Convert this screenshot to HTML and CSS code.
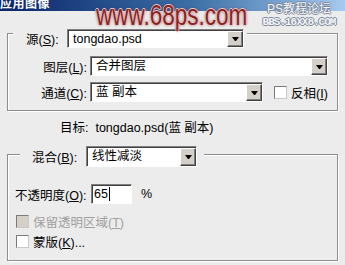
FILE: index.html
```html
<!DOCTYPE html>
<html lang="zh-CN">
<head>
    <meta charset="UTF-8">
    <meta name="viewport" content="width=device-width, initial-scale=1.0">
    <title>应用图像</title>
    <link rel="stylesheet" href="styles.css">
</head>
<body>
    <div class="titlebar"><span class="title">应用图像</span></div>

    <!-- watermark over the title bar -->
    <div class="watermark">www.68ps.com</div>
    <div class="bbs">
        <span class="bbs-cn">PS教程论坛</span>
        <span class="bbs-url">BBS.16XX8.COM</span>
    </div>

    <div class="dialog">
        <div class="group group-source">
            <div class="group-head head-source">
                <span class="lbl">源(<u>S</u>):</span>
                <div class="combo combo-source">
                    <span class="combo-text">tongdao.psd</span>
                    <span class="combo-btn"><i class="arrow"></i></span>
                </div>
            </div>
            <div class="field-grid">
                <span class="lbl">图层(<u>L</u>):</span>
                <div class="combo combo-layer">
                    <span class="combo-text">合并图层</span>
                    <span class="combo-btn"><i class="arrow"></i></span>
                </div>
                <span class="lbl">通道(<u>C</u>):</span>
                <div class="channel-row">
                    <div class="combo combo-channel">
                        <span class="combo-text">蓝 副本</span>
                        <span class="combo-btn"><i class="arrow"></i></span>
                    </div>
                    <span class="check"></span>
                    <span class="check-text">反相(<u>I</u>)</span>
                </div>
            </div>
        </div>

        <div class="target">目标:&nbsp; tongdao.psd(蓝 副本)</div>

        <div class="group group-blend">
            <div class="group-head head-blend">
                <span class="lbl">混合(<u>B</u>):</span>
                <div class="combo combo-blend">
                    <span class="combo-text">线性减淡</span>
                    <span class="combo-btn"><i class="arrow"></i></span>
                </div>
            </div>
            <div class="opacity-row">
                <span class="lbl opacity-label">不透明度(<u>O</u>):</span>
                <div class="textbox"><span>65</span><i class="caret"></i></div>
                <span class="percent">%</span>
            </div>
            <div class="check-row disabled">
                <span class="check check-disabled"></span>
                <span class="check-text">保留透明区域(<u>T</u>)</span>
            </div>
            <div class="check-row">
                <span class="check"></span>
                <span class="check-text">蒙版(<u>K</u>)...</span>
            </div>
        </div>
    </div>
</body>
</html>
```

FILE: styles.css
```css
body {
    margin: 0;
    width: 345px;
    height: 265px;
    overflow: hidden;
    position: relative;
    background-color: #ececec;
    color: #000;
    font-family: 'Liberation Sans', 'Noto Sans CJK SC', sans-serif;
    font-size: 12.5px;
}

.titlebar {
    height: 11px;
    overflow: hidden;
    background: linear-gradient(to right, #0a246a 0%, #3a6ea5 55%, #a6caf0 100%);
    color: #fff;
    font-weight: bold;
    font-size: 12px;
    line-height: 9px;
}

.title {
    letter-spacing: 0.5px;
}

.watermark {
    position: absolute;
    left: 96px;
    top: 0;
    font-family: 'Liberation Sans', Arial, sans-serif;
    font-size: 30px;
    line-height: 30px;
    color: #8a2222;
    transform: scaleX(0.75);
    transform-origin: left top;
    text-shadow: 1px 0 0 #e9c9c9, -1px 0 0 #e9c9c9, 0 1px 0 #e9c9c9, 0 -1px 0 #e9c9c9,
        0 0 3px #6b1515;
}

.bbs {
    position: absolute;
    left: 261px;
    top: 3px;
    width: 76px;
    display: flex;
    flex-direction: column;
    align-items: center;
    color: #f4f6fa;
    text-shadow: 1px 0 0 #7d8799, -1px 0 0 #7d8799, 0 1px 0 #7d8799, 0 -1px 0 #7d8799;
}

.bbs-cn {
    font-size: 12px;
    line-height: 13px;
}

.bbs-url {
    font-family: 'Liberation Mono', monospace;
    font-weight: bold;
    font-size: 11px;
    line-height: 12px;
    letter-spacing: -1px;
}

.dialog {
    padding: 0 7px;
}

.group {
    border: 1px solid #8d8d8d;
    box-shadow: inset 1px 1px 0 #fff, 1px 1px 0 #fff;
}

.group-source {
    margin-top: 22px;
    padding-bottom: 8px;
}

.group-head {
    display: flex;
    align-items: center;
    width: fit-content;
    background-color: #ececec;
}

.head-source {
    margin: -5px 0 0 5px;
    padding: 0 3px 0 13px;
    gap: 5px;
}

.head-source .lbl {
    width: 36px;
}

.head-blend {
    margin: -9px 0 0 5px;
    padding: 0 7px 0 12px;
    gap: 6px;
}

.head-blend .lbl {
    width: 48px;
}

.lbl {
    white-space: nowrap;
}

.combo {
    display: flex;
    height: 20px;
    box-sizing: border-box;
    background-color: #fff;
    border: 1px solid;
    border-color: #808080 #fff #fff #808080;
    box-shadow: inset 1px 1px 0 #404040;
}

.combo-source {
    width: 177px;
    height: 19px;
}

.combo-layer {
    width: 238px;
}

.combo-channel {
    width: 173px;
}

.combo-blend {
    width: 111px;
    height: 21px;
}

.combo-text {
    flex: 1;
    padding: 1px 0 0 5px;
    line-height: 16px;
    white-space: nowrap;
    overflow: hidden;
}

.combo-btn {
    width: 16px;
    margin: 1px 0 0 0;
    box-sizing: border-box;
    display: flex;
    align-items: center;
    justify-content: center;
    background-color: #d4d0c8;
    border: 1px solid;
    border-color: #fff #404040 #404040 #fff;
    box-shadow: inset -1px -1px 0 #808080;
}

.arrow {
    width: 1px;
    height: 0;
    border-top: 4px solid #000;
    border-left: 3px solid transparent;
    border-right: 3px solid transparent;
}

.field-grid {
    display: grid;
    grid-template-columns: 79px auto;
    column-gap: 3px;
    row-gap: 6px;
    align-items: center;
    margin-top: 8px;
}

.field-grid .lbl {
    text-align: right;
}

.channel-row {
    display: flex;
    align-items: center;
}

.channel-row .check {
    margin-left: 11px;
}

.check {
    width: 13px;
    height: 13px;
    box-sizing: border-box;
    background-color: #fff;
    border: 1px solid;
    border-color: #7a7a7a #c8c8c8 #c8c8c8 #7a7a7a;
}

.check-disabled {
    background-color: #d4d0c8;
}

.check-text {
    margin-left: 4px;
    white-space: nowrap;
}

.target {
    margin-top: 8px;
    padding-left: 53px;
    line-height: 18px;
}

.group-blend {
    margin-top: 17px;
    padding: 0 0 10px 7px;
}

.opacity-row {
    display: flex;
    align-items: center;
    margin-top: 17px;
    height: 20px;
}

.opacity-label {
    width: 76px;
}

.textbox {
    width: 41px;
    height: 20px;
    box-sizing: border-box;
    display: flex;
    align-items: center;
    padding-left: 2px;
    background-color: #fff;
    border: 1px solid;
    border-color: #808080 #fff #fff #808080;
    box-shadow: inset 1px 1px 0 #404040;
}

.caret {
    width: 1px;
    height: 14px;
    margin-left: 1px;
    background-color: #000;
}

.percent {
    margin-left: 9px;
}

.check-row {
    display: flex;
    align-items: center;
    height: 18px;
    padding-left: 1px;
}

.check-row.disabled {
    margin-top: 8px;
    margin-bottom: 2px;
    color: #a0a0a0;
}
```
